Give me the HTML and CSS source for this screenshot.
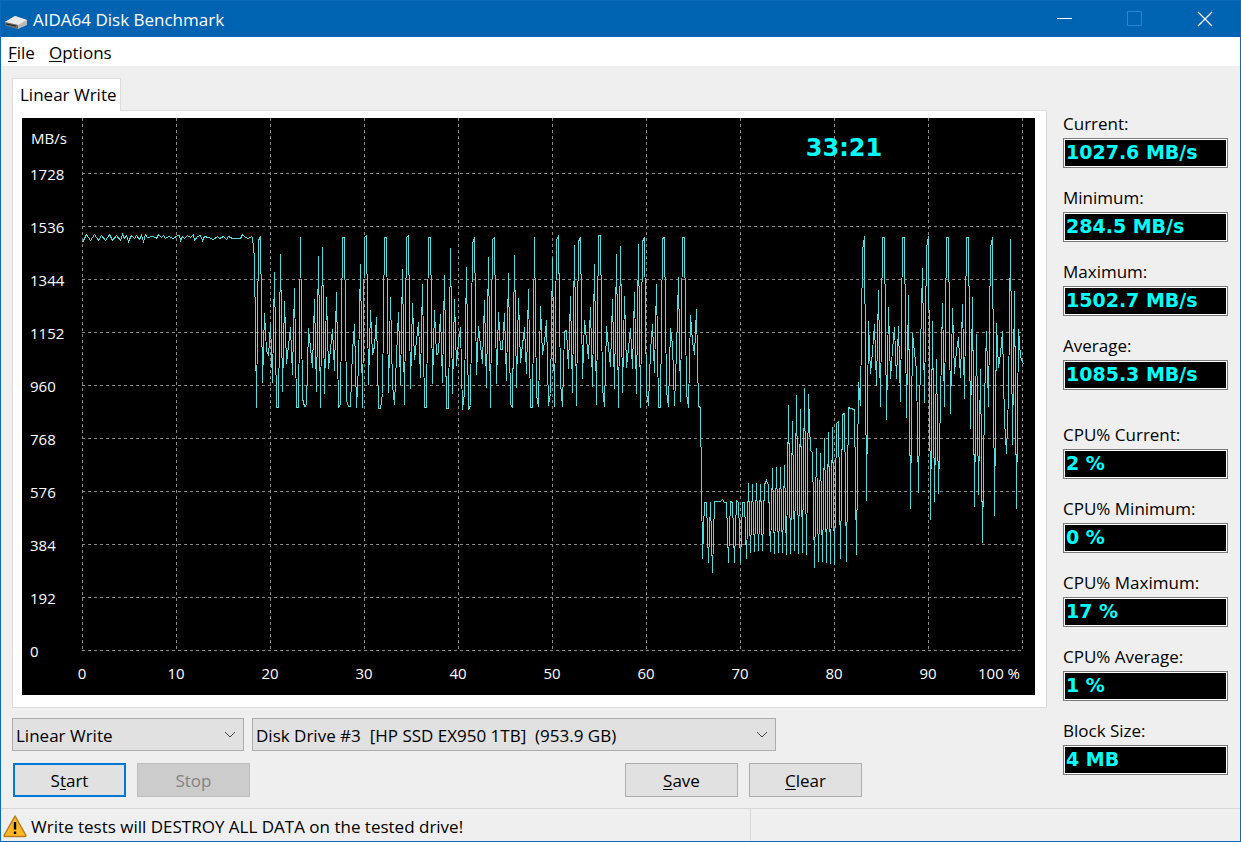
FILE: index.html
```html
<!DOCTYPE html>
<html lang="en">
<head>
<meta charset="utf-8">
<title>AIDA64 Disk Benchmark</title>
<link rel="stylesheet" href="styles.css">
</head>
<body>
<div class="window">
  <header class="titlebar">
    <svg class="disk-icon" viewBox="0 0 24 16" aria-hidden="true">
      <path d="M1 8 11 2l12 4v5l-9 4-13-4z" fill="#b9b9b9"/>
      <path d="M1 8 11 2l12 4-9 5z" fill="#e9e9e9"/>
      <path d="m1 8 13 3v4L1 11z" fill="#6b6763"/>
      <path d="m2 10 10 2" stroke="#222" fill="none"/>
    </svg>
    <h1 class="title">AIDA64 Disk Benchmark</h1>
    <button class="caption-button" type="button" aria-label="Minimize"><svg viewBox="0 0 16 16"><path d="M0 7.500H15" stroke="#fff"/></svg></button>
    <button class="caption-button" type="button" aria-label="Maximize" disabled><svg viewBox="0 0 16 16"><path d="M.5 .5h14v14H.5z" stroke="#2288d8" fill="none"/></svg></button>
    <button class="caption-button" type="button" aria-label="Close"><svg viewBox="0 0 16 16"><path d="m1 1 14 14M15 1 1 15" stroke="#fff" stroke-width="1.300"/></svg></button>
  </header>
  <nav class="menu">
    <button class="menu-item" type="button"><u>F</u>ile</button>
    <button class="menu-item" type="button"><u>O</u>ptions</button>
  </nav>
  <main class="content">
    <section class="workspace">
      <div class="tabs" role="tablist"><button class="tab" type="button" role="tab" aria-selected="true">Linear Write</button></div>
      <div class="panel">
        <svg class="chart" viewBox="22 118 1013 577" role="img" aria-label="Linear write speed">
          <rect x="22" y="118" width="1013" height="577" fill="#000"/>
          <path class="grid" d="M82.500 118V651M176.500 118V651M270.500 118V651M364.500 118V651M458.500 118V651M552.500 118V651M646.500 118V651M740.500 118V651M834.500 118V651M928.500 118V651M1022.500 118V651"/>
          <path class="grid" d="M82 173.500H1023M82 226.500H1023M82 279.500H1023M82 332.500H1023M82 385.500H1023M82 438.500H1023M82 491.500H1023M82 544.500H1023M82 597.500H1023M82 650.500H1023"/>
          <polyline class="trace" transform="translate(.5 .5)" points="82,242 86,234 90,240 94,234 98,240 101,235 105,240 109,234 112,240 116,235 120,240 122,234 124,238 126,235 128,241 131,235 134,238 136,235 139,239 141,235 143,241 145,234 147,237 153,236 156,238 158,234 161,237 163,235 165,238 168,236 173,238 177,235 179,235 180,240 182,236 184,238 187,235 190,237 193,234 194,240 197,236 200,235 202,240 204,236 208,237 213,239 217,236 219,238 223,236 226,239 228,236 232,238 240,238 242,234 245,237 248,238 251,236
            252,237 254,258 256,407 258,240 260,236 262,382 264,313 266,350 268,355 270,324 272,382 274,272 276,407 278,407 280,254 282,391 284,301 286,363 290,327 292,374 294,288 296,407 298,407 300,237 302,398 304,406 306,405 308,328 312,367 314,299 316,391 318,256 320,407 322,247 324,393 326,297 328,368 332,329 334,370 336,292 338,407 340,404 342,237 344,237 346,400 348,406 350,406 352,350 354,324 356,407 358,365 360,264 362,407 364,237 366,235 368,384 370,310 372,354 374,346 376,317 378,408 380,408 382,393 384,237 386,237 388,392 390,297 392,385 394,404 396,356 398,312
            400,384 402,269 404,404 406,237 408,235 410,388 412,303 414,359 418,322 420,377 422,284 424,407 426,407 428,237 430,237 432,383 434,310 436,354 438,353 440,314 442,382 444,275 446,408 448,408 450,248 452,393 454,299 456,365 458,340 460,327 462,409 464,392 466,267 468,409 470,405 472,243 474,237 476,374 478,326 482,363 484,300 486,387 488,257 490,407 492,239 494,237 496,383 498,312 500,349 502,349 504,313 506,380 508,273 510,404 512,407 514,255 516,387 518,298 520,362 524,327 526,373 528,289 530,407 532,407 534,237 536,395 538,406 540,306 542,354 544,342
            546,320 548,405 550,393 552,258 554,406 556,240 558,235 560,383 562,406 564,331 566,330 568,368 570,296 572,392 574,245 576,405 578,241 580,237 582,378 584,320 588,358 590,307 592,386 594,264 596,404 598,235 600,235 602,388 604,406 606,326 610,366 612,299 614,388 616,254 618,407 620,246 622,392 624,296 626,367 630,328 632,368 634,292 636,393 638,244 640,407 642,241 644,237 646,392 648,405 650,350 652,324 654,372 656,284 658,407 660,407 662,238 664,237 666,390 668,406 670,328 672,344 674,405 676,350 678,277 680,401 682,237 684,237 686,393 688,407 690,315 692,341 694,354 696,309 698,406 700,407
            702,558 704,502 706,502 708,562 710,502 712,572 714,501 720,501 722,499 724,502 726,502 728,562 730,501 732,502 734,562 736,500 738,502 740,562 742,502 744,502 746,558 748,483 750,552 752,484 754,551 756,483 758,550 760,484 762,550 764,484 766,480 768,485 770,551 772,468 774,553 776,467 778,552 780,467 782,552 784,465 786,554 788,405 790,553 792,421 794,550 796,395 798,553 800,409 802,552 804,388 806,554 808,394 810,450 812,452 814,567 816,448 818,561 820,453 822,561 824,438 826,562 828,432 830,563 832,427 834,564 836,423 838,421 840,558 842,414 844,413 846,561 848,407 850,408 854,409
            856,554 858,382 860,405 862,250 864,236 866,500 868,321 870,373 872,351 874,324 876,385 878,290 880,406 882,237 884,237 886,419 888,307 890,378 892,349 894,327 896,378 898,326 900,401 902,237 904,237 906,417 908,295 910,508 912,333 914,352 916,370 918,492 920,350 922,268 924,402 926,248 928,236 930,519 932,321 934,501 936,359 938,493 940,400 942,303 944,406 946,237 948,237 950,413 952,308 954,373 956,350 958,337 960,377 962,304 964,398 966,237 968,237 970,428 972,297 974,506 976,334 978,494 980,369 982,542 984,400 986,331 988,406 990,247 992,237 994,515 996,323 998,367 1000,353 1002,331 1004,420 1006,453 1008,395 1010,239 1012,444 1014,291 1016,508 1018,329 1020,356 1023,364"/>
          <g class="axis">
            <text x="31" y="144">MB/s</text>
            <text x="30" y="180">1728</text><text x="30" y="233">1536</text><text x="30" y="286">1344</text><text x="30" y="339">1152</text><text x="30" y="392">960</text><text x="30" y="445">768</text><text x="30" y="498">576</text><text x="30" y="551">384</text><text x="30" y="604">192</text><text x="30" y="657">0</text>
          </g>
          <g class="axis axis-x">
            <text x="82" y="679">0</text><text x="176" y="679">10</text><text x="270" y="679">20</text><text x="364" y="679">30</text><text x="458" y="679">40</text><text x="552" y="679">50</text><text x="646" y="679">60</text><text x="740" y="679">70</text><text x="834" y="679">80</text><text x="928" y="679">90</text><text x="999" y="679">100 %</text>
          </g>
          <text class="timer" x="844" y="156">33:21</text>
        </svg>
      </div>
      <div class="choices">
        <div class="picker picker-test">
          <select aria-label="Test"><option>Linear Write</option></select>
          <svg class="chevron" viewBox="0 0 12 8" aria-hidden="true"><path d="m1 1 5 5 5-5"/></svg>
        </div>
        <div class="picker picker-drive">
          <select aria-label="Drive"><option>Disk Drive #3&nbsp; [HP SSD EX950 1TB]&nbsp; (953.9 GB)</option></select>
          <svg class="chevron" viewBox="0 0 12 8" aria-hidden="true"><path d="m1 1 5 5 5-5"/></svg>
        </div>
      </div>
      <div class="actions">
        <button class="action action-default" type="button">S<u>t</u>art</button>
        <button class="action" type="button" disabled>Stop</button>
        <button class="action action-save" type="button"><u>S</u>ave</button>
        <button class="action" type="button"><u>C</u>lear</button>
      </div>
    </section>
    <aside class="readings">
      <div class="reading"><label for="cur">Current:</label><output id="cur">1027.6 MB/s</output></div>
      <div class="reading"><label for="min">Minimum:</label><output id="min">284.5 MB/s</output></div>
      <div class="reading"><label for="max">Maximum:</label><output id="max">1502.7 MB/s</output></div>
      <div class="reading"><label for="avg">Average:</label><output id="avg">1085.3 MB/s</output></div>
      <div class="reading reading-cpu"><label for="ccur">CPU% Current:</label><output id="ccur">2 %</output></div>
      <div class="reading"><label for="cmin">CPU% Minimum:</label><output id="cmin">0 %</output></div>
      <div class="reading"><label for="cmax">CPU% Maximum:</label><output id="cmax">17 %</output></div>
      <div class="reading"><label for="cavg">CPU% Average:</label><output id="cavg">1 %</output></div>
      <div class="reading"><label for="block">Block Size:</label><output id="block">4 MB</output></div>
    </aside>
  </main>
  <footer class="status">
    <div class="status-message">
      <svg class="warning" viewBox="0 0 24 24" aria-hidden="true"><path d="M12 1 23 20.500Q23 21.500 22 21.500H2Q1 21.500 1 20.500z" fill="#fdb827" stroke="#b87a1c" stroke-width="1.500" stroke-linejoin="round"/><path d="M12 7v7.500M12 16.500v2.500" stroke="#000" stroke-width="2.400"/></svg>
      <span>Write tests will DESTROY ALL DATA on the tested drive!</span>
    </div>
    <div class="status-extra"></div>
  </footer>
</div>
</body>
</html>
```
FILE: styles.css
```css
* { box-sizing: border-box; }
body {
  margin: 0;
  background: #f0f0f0;
  color: #000;
  font: 17px/24px "Open Sans", "Noto Sans", sans-serif;
}
button, select { font: inherit; color: inherit; }
button { padding: 0; border: 0; background: none; }
u { text-underline-offset: 2px; text-decoration-thickness: 1px; }

.window {
  display: flex;
  flex-direction: column;
  min-height: 100vh;
  border: 1px solid #0a6abc;
  background: #f0eff0;
}

.titlebar { display: flex; height: 36px; background: #0063b1; color: #fff; }
.disk-icon { width: 24px; height: 16px; margin: 13px 5px 0 3px; }
.title { flex: 1; margin: 0; font-size: 17px; font-weight: 400; line-height: 37px; }
.caption-button { display: grid; place-items: center; width: 70px; }
.caption-button svg { width: 16px; height: 16px; }

.menu { display: flex; gap: 14px; height: 29px; padding: 2px 0 0 7px; background: #fff; }

.content { display: flex; flex: 1; gap: 16px; padding: 12px 12px 11px 11px; }
.workspace { flex: 1; min-width: 0; }
.tabs { display: flex; }
.tab {
  height: 33px;
  margin-bottom: -1px;
  padding: 0 3px 0 7px;
  border: 1px solid #dcdcdc;
  border-bottom: 0;
  background: #fff;
  position: relative;
}
.panel { padding: 7px 11px 12px 9px; border: 1px solid #dcdcdc; background: #fff; }
.chart { display: block; width: 100%; height: auto; }
.grid { stroke: #8a8a8a; stroke-dasharray: 3 3; fill: none; shape-rendering: crispEdges; }
.trace { stroke: #4fdcdc; fill: none; shape-rendering: crispEdges; }
.axis { fill: #fff; font-size: 15px; }
.axis-x { text-anchor: middle; }
.timer { fill: #0ff; font: bold 24px "DejaVu Sans", sans-serif; text-anchor: middle; }

.choices { display: flex; gap: 8px; margin-top: 10px; }
.picker { position: relative; height: 33px; }
.picker-test { width: 232px; }
.picker-drive { width: 524px; }
.picker select {
  width: 100%;
  height: 100%;
  padding: 2px 24px 0 3px;
  border: 1px solid #adadad;
  border-radius: 0;
  background: #e1e1e1;
  appearance: none;
}
.chevron { position: absolute; right: 8px; top: 13px; width: 12px; height: 8px; fill: none; stroke: #444; pointer-events: none; }

.actions { display: flex; gap: 11px; margin-top: 12px; padding-left: 1px; }
.action { width: 113px; height: 34px; padding-top: 2px; border: 1px solid #adadad; background: #e1e1e1; }
.action-default { border: 2px solid #0078d7; }
.action:disabled { border-color: #bfbfbf; background: #ccc; color: #838383; }
.action-save { margin-left: 364px; }

.readings { display: flex; flex-direction: column; gap: 18px; width: 165px; padding-top: 34px; }
.reading { display: flex; flex-direction: column; gap: 2px; }
.reading-cpu { margin-top: 15px; }
.reading output {
  height: 30px;
  padding-left: 2px;
  border: 1px solid #7a7a7a;
  outline: 1px solid #fff;
  outline-offset: -2px;
  background: #000;
  color: #0ff;
  font: bold 19px/27px "DejaVu Sans", sans-serif;
}

.status { display: flex; height: 33px; border-top: 1px solid #d7d7d7; }
.status-message { display: flex; flex: 0 0 750px; align-items: center; gap: 4px; padding: 3px 0 0 2px; border-right: 1px solid #d7d7d7; }
.status-extra { flex: 1; }
.warning { width: 24px; height: 24px; }
```
